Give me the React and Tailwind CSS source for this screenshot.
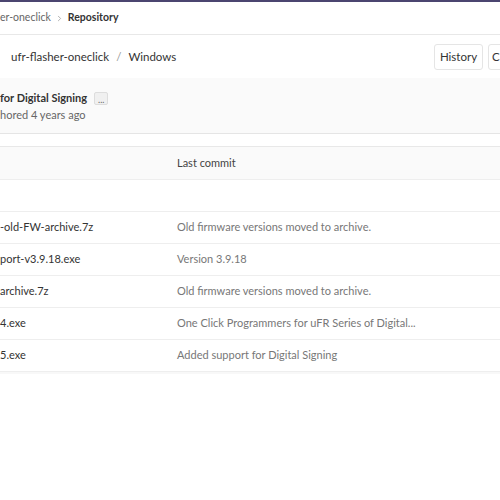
import { ChevronRight } from "lucide-react";

export default function App() {
  const rows = [
    { name: "-old-FW-archive.7z", msg: "Old firmware versions moved to archive." },
    { name: "port-v3.9.18.exe", msg: "Version 3.9.18" },
    { name: "archive.7z", msg: "Old firmware versions moved to archive." },
    { name: "4.exe", msg: "One Click Programmers for uFR Series of Digital..." },
    { name: "5.exe", msg: "Added support for Digital Signing" },
  ];

  return (
    <div className="w-[500px] h-[500px] overflow-hidden bg-white text-[11px] font-['Lato',sans-serif] text-[#333]">
      {/* top bar */}
      <div className="h-[2px] bg-[#4b4570]" />

      {/* breadcrumb */}
      <div className="h-[33px] flex items-center gap-[4px] border-b border-[#e8e8e8] text-[10.5px]">
        <span className="text-[#666]">er-oneclick</span>
        <ChevronRight size={9} strokeWidth={2} className="text-[#999]" />
        <span className="font-bold text-[#333]">Repository</span>
      </div>

      {/* path row */}
      <div className="h-[43px] flex items-center pl-[11px]">
        <div className="flex items-center gap-[7px] text-[11.5px] text-[#333]">
          <span>ufr-flasher-oneclick</span>
          <span className="text-[#999]">/</span>
          <span>Windows</span>
        </div>
        <div className="ml-auto flex gap-[5px] -mr-[24px]">
          <div className="h-[26px] w-[49px] justify-center flex items-center border border-[#e5e5e5] rounded-[3px] text-[11.5px] text-[#333]">History</div>
          <div className="h-[26px] w-[36px] px-[3px] flex items-center border border-[#e5e5e5] rounded-[3px] text-[11.5px] text-[#333]">C</div>
        </div>
      </div>

      {/* last commit box */}
      <div className="h-[56px] pt-[2px] bg-[#fafafa] border-b border-[#e5e5e5] flex flex-col justify-center">
        <div className="flex items-center gap-[7px]">
          <span className="font-bold text-[#333]">for Digital Signing</span>
          <span className="h-[13px] px-[3px] bg-[#f0f0f0] border border-[#ddd] rounded-[2px] text-[9px] leading-none flex items-end text-[#666]">...</span>
        </div>
        <span className="text-[#666]">hored 4 years ago</span>
      </div>

      {/* table */}
      <div className="mt-[12px] border-t border-[#e8e8e8]">
        <div className="h-[33px] bg-[#fafafa] border-b border-[#eee] flex items-center">
          <span className="ml-[177px] text-[#444]">Last commit</span>
        </div>
        <div className="h-[32px] border-b border-[#eee]" />
        {rows.map((r) => (
          <div key={r.msg + r.name} className="h-[32px] border-b border-[#eee] flex items-center">
            <span className="w-[177px] text-[#333]">{r.name}</span>
            <span className="text-[#777]">{r.msg}</span>
          </div>
        ))}
        <div className="h-[2px] bg-[#f8f8f8]" />
      </div>
    </div>
  );
}
